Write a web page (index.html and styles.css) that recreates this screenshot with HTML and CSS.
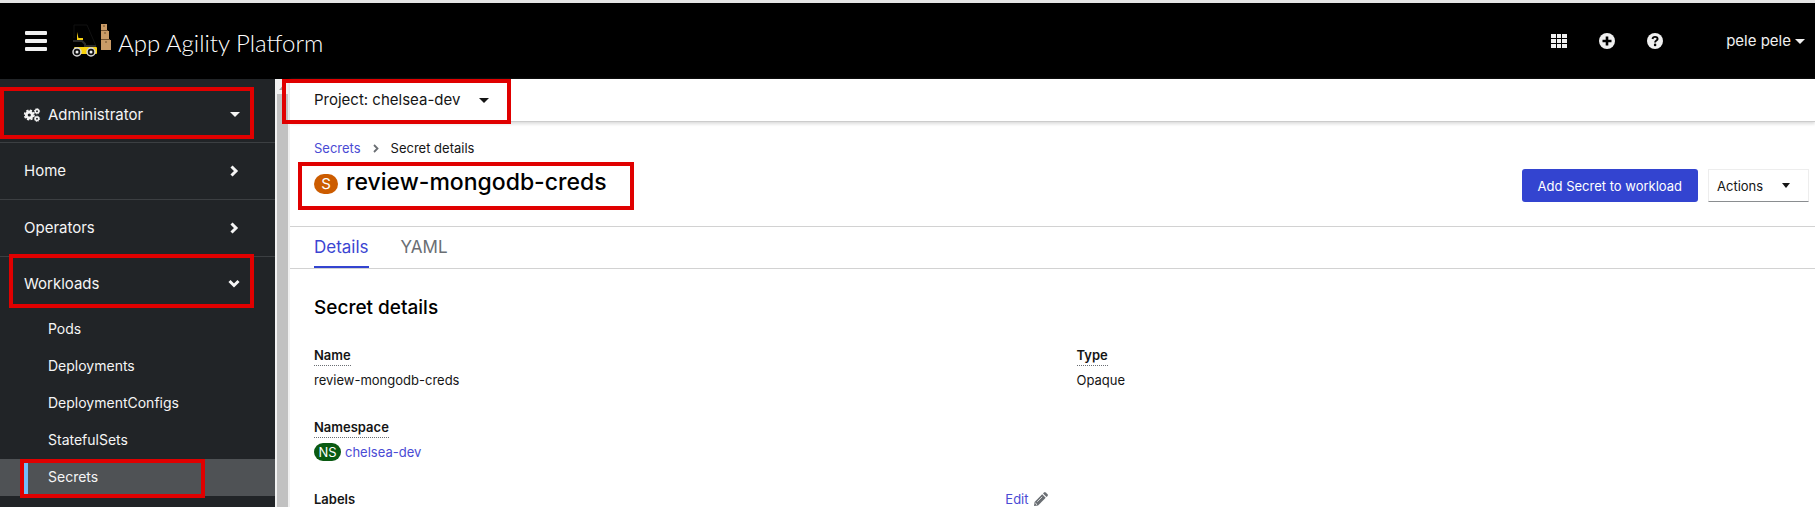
FILE: index.html
```html
<!DOCTYPE html>
<html lang="en">
<head>
<meta charset="utf-8">
<title>review-mongodb-creds · Secret details</title>
<link rel="stylesheet" href="styles.css">
</head>
<body>
<header class="masthead">
  <button class="icon-button" aria-label="Toggle navigation">
    <svg width="22" height="20" viewBox="0 0 22 20" fill="currentColor"><rect y="0" width="22" height="4" rx="1"/><rect y="8" width="22" height="4" rx="1"/><rect y="16" width="22" height="4" rx="1"/></svg>
  </button>
  <a class="brand" href="#">
    <svg width="39" height="34" viewBox="0 0 39 34" aria-hidden="true">
      <path d="M2 14V1H15L24 22" fill="none" stroke="#111" stroke-width="1"/>
      <path d="M5 8L6.500 14H11V16H5Z" fill="#f5cf12"/>
      <path d="M1 17H10L13 20V22H24" fill="none" stroke="#292929" stroke-width="2"/>
      <rect x="2" y="23" width="23" height="7" rx="1" fill="#f8d20c"/>
      <g fill="#111" stroke="#d8d8d8" stroke-width="1.500"><circle cx="5" cy="28" r="4"/><circle cx="19" cy="28" r="4"/></g>
      <g fill="#eee"><circle cx="5" cy="28" r="1.500"/><circle cx="19" cy="28" r="1.500"/></g>
      <g fill="#c99b67"><rect x="29" y="0" width="6" height="6"/><rect x="29" y="7" width="8" height="8"/><rect x="29" y="16" width="10" height="10"/></g>
      <path d="M32 1v2M33 8v2M34 17v2M29 6.500h7M29 15.500h9" stroke="#70502f" fill="none"/>
    </svg>
    <span>App Agility Platform</span>
  </a>
  <div class="tools">
    <button class="icon-button" aria-label="Applications">
      <svg width="16" height="14" viewBox="0 0 16 14" fill="currentColor"><path d="M0 0h5v4H0zM6 0h4v4H6zM11 0h5v4h-5zM0 5h5v4H0zM6 5h4v4H6zM11 5h5v4h-5zM0 10h5v4H0zM6 10h4v4H6zM11 10h5v4h-5z"/></svg>
    </button>
    <button class="icon-button" aria-label="Add">
      <svg width="16" height="16" viewBox="0 0 16 16"><circle cx="8" cy="8" r="8" fill="currentColor"/><path d="M8 3.500v9M3.500 8h9" stroke="#000" stroke-width="2.600"/></svg>
    </button>
    <button class="icon-button" aria-label="Help">
      <svg width="16" height="16" viewBox="0 0 16 16"><circle cx="8" cy="8" r="8" fill="currentColor"/><path d="M5.500 6C5.700 4.500 6.700 3.900 8 3.900C9.500 3.900 10.600 4.700 10.600 5.900C10.600 7.500 8.100 7.500 8.100 9.400" fill="none" stroke="#000" stroke-width="1.900"/><circle cx="8.100" cy="11.900" r="1.300"/></svg>
    </button>
    <button class="user">pele pele <svg width="10" height="5" viewBox="0 0 10 5" fill="currentColor"><path d="M0 0H10L5 5Z"/></svg></button>
  </div>
</header>
<div class="page">
  <nav class="sidebar" aria-label="Main">
    <div class="nav-section perspective">
      <button class="nav-row">
        <svg width="16" height="14" viewBox="0 0 16 14" fill="none" stroke="currentColor">
          <circle cx="5.300" cy="7" r="3" stroke-width="2.800"/>
          <circle cx="5.300" cy="7" r="4.700" stroke-width="1.600" stroke-dasharray="2.200 1.490"/>
          <circle cx="13" cy="3.200" r="1.700" stroke-width="1.500"/><circle cx="13" cy="3.200" r="2.600" stroke-width="1" stroke-dasharray="1.200 .84"/>
          <circle cx="13" cy="10.800" r="1.700" stroke-width="1.500"/><circle cx="13" cy="10.800" r="2.600" stroke-width="1" stroke-dasharray="1.200 .84"/>
        </svg>
        <span>Administrator</span>
        <svg class="arrow" width="10" height="5" viewBox="0 0 10 5" fill="currentColor"><path d="M0 0H10L5 5Z"/></svg>
      </button>
      <span class="mark"></span>
    </div>
    <div class="nav-section"><button class="nav-row"><span>Home</span><svg class="arrow" width="10" height="12" viewBox="0 0 10 12"><path d="M1.500 1.500L6 6L1.500 10.500" fill="none" stroke="currentColor" stroke-width="3"/></svg></button></div>
    <div class="nav-section"><button class="nav-row"><span>Operators</span><svg class="arrow" width="10" height="12" viewBox="0 0 10 12"><path d="M1.500 1.500L6 6L1.500 10.500" fill="none" stroke="currentColor" stroke-width="3"/></svg></button></div>
    <div class="nav-section workloads">
      <button class="nav-row" aria-expanded="true"><span>Workloads</span><svg class="arrow" width="12" height="10" viewBox="0 0 12 10"><path d="M1.500 2L6 6.500L10.500 2" fill="none" stroke="currentColor" stroke-width="3"/></svg></button>
      <span class="mark"></span>
    </div>
    <ul class="subnav">
      <li><a href="#">Pods</a></li>
      <li><a href="#">Deployments</a></li>
      <li><a href="#">DeploymentConfigs</a></li>
      <li><a href="#">StatefulSets</a></li>
      <li class="current"><a href="#" aria-current="page">Secrets</a><span class="mark"></span></li>
    </ul>
  </nav>
  <div class="scrollbar" aria-hidden="true">
    <svg width="7" height="4" viewBox="0 0 7 4" fill="#a3a3a3"><path d="M0 4L3.500 0L7 4Z"/></svg>
    <div class="thumb"></div>
  </div>
  <main class="content">
    <div class="project-bar">
      <button class="project">Project: chelsea-dev <svg width="10" height="5" viewBox="0 0 10 5" fill="currentColor"><path d="M0 0H10L5 5Z"/></svg></button>
      <span class="mark"></span>
    </div>
    <div class="heading">
      <div class="heading-text">
        <nav class="breadcrumb" aria-label="Breadcrumb">
          <a href="#">Secrets</a>
          <svg width="6" height="9" viewBox="0 0 6 9"><path d="M1 1L4.500 4.500L1 8" fill="none" stroke="#6a6e73" stroke-width="1.800"/></svg>
          <span>Secret details</span>
        </nav>
        <div class="title">
          <span class="badge secret">S</span>
          <h1>review-mongodb-creds</h1>
          <span class="mark"></span>
        </div>
      </div>
      <div class="actions">
        <button class="primary">Add Secret to workload</button>
        <button class="menu">Actions <svg width="8" height="5" viewBox="0 0 8 5" fill="currentColor"><path d="M0 0H8L4 5Z"/></svg></button>
      </div>
    </div>
    <nav class="tabs" aria-label="Secret views">
      <a class="active" href="#" aria-current="page">Details</a>
      <a href="#">YAML</a>
    </nav>
    <section class="details">
      <h2>Secret details</h2>
      <div class="columns">
        <dl>
          <div class="field"><dt><span>Name</span></dt><dd>review-mongodb-creds</dd></div>
          <div class="field"><dt><span>Namespace</span></dt><dd><span class="badge namespace">NS</span><a href="#">chelsea-dev</a></dd></div>
          <div class="field"><dt>Labels<button class="edit">Edit
            <svg width="14" height="14" viewBox="0 0 14 14" fill="#6a6e73"><path d="M8.200 2.300L11.700 5.800L4.100 13.400L0 14L.6 9.900Z"/><path d="M9 1.500L10.100.4Q10.900-.3 11.700.4L13.600 2.300Q14.300 3.100 13.600 3.900L12.500 5Z"/><path d="M3.200 9.800L8.200 4.800" stroke="#fff" stroke-width=".7"/><path d="M1.300 11L3 12.700" stroke="#fff"/></svg></button></dt></div>
        </dl>
        <dl>
          <div class="field"><dt><span>Type</span></dt><dd>Opaque</dd></div>
        </dl>
      </div>
    </section>
  </main>
</div>
</body>
</html>
```
FILE: styles.css
```css
* { box-sizing: border-box; }
body {
  margin: 0;
  height: 100vh;
  overflow: hidden;
  display: flex;
  flex-direction: column;
  background: #fff;
  color: #151515;
  font-family: Inter, "Open Sans", sans-serif;
  font-size: 13px;
  line-height: 20px;
}
button {
  border: 0;
  padding: 0;
  background: none;
  color: inherit;
  font: inherit;
  cursor: pointer;
}
a { color: #4a4bd4; text-decoration: none; }
h1, h2, dl, dd, ul { margin: 0; padding: 0; }
svg { display: block; flex: none; overflow: visible; }

.mark {
  position: absolute;
  border: 4px solid #e00000;
  pointer-events: none;
  z-index: 2;
}

.masthead {
  flex: none;
  height: 79px;
  padding: 0 10px 0 25px;
  display: flex;
  align-items: center;
  background: #000;
  border-top: 3px solid #e4e4e4;
  color: #f0f0f0;
}
.icon-button { display: flex; }
.brand {
  display: flex;
  align-items: center;
  gap: 7px;
  margin-left: 25px;
  color: #fff;
  font-family: Lato, sans-serif;
  font-size: 24px;
  font-weight: 300;
  line-height: 32px;
}
.brand span { padding-top: 4px; }
.tools {
  margin-left: auto;
  display: flex;
  align-items: center;
  gap: 32px;
}
.user {
  display: flex;
  align-items: center;
  gap: 4px;
  margin-left: 31px;
  font-size: 15px;
}

.page { flex: 1; min-height: 0; display: flex; }
.sidebar {
  flex: none;
  width: 275px;
  background: #212427;
  color: #f5f5f5;
}
.nav-section {
  position: relative;
  border-bottom: 1px solid #3c3f42;
}
.nav-row {
  width: 100%;
  height: 56px;
  padding: 0 35px 0 24px;
  display: flex;
  align-items: center;
  font-size: 15px;
  text-align: left;
}
.perspective .nav-row { height: 63px; padding-top: 8px; gap: 8px; }
.arrow { margin-left: auto; }
.workloads { border: 0; }
.workloads .nav-row { height: 54px; }
.perspective .mark { inset: 8px 21px 3px 0; }
.workloads .mark { inset: -3px 21px 3px 9px; }
.subnav { list-style: none; font-size: 14px; }
.subnav li { position: relative; }
.subnav a {
  display: block;
  margin-left: 24px;
  padding: 8px 24px 9px;
  color: #f5f5f5;
}
.current { background: #4f5255; }
.subnav .current a { border-left: 4px solid #73bcf7; padding-left: 20px; }
.current .mark { inset: 0 70px -2px 20px; }

.scrollbar {
  flex: none;
  width: 15px;
  padding: 7px 2px 0;
  display: flex;
  flex-direction: column;
  align-items: center;
  gap: 4px;
  background: #f1f1f1;
}
.thumb { width: 11px; flex: 1; background: #c1c1c1; }

.content { flex: 1; min-width: 0; }
.project-bar {
  position: relative;
  height: 43px;
  padding: 0 24px;
  display: flex;
  align-items: center;
  border-bottom: 1px solid #ccc;
  box-shadow: 0 2px 3px #ddd;
}
.project {
  display: flex;
  align-items: center;
  gap: 19px;
  font-size: 15px;
}
.project-bar .mark { left: -8px; top: 0; width: 229px; height: 45px; }

.heading {
  padding: 16px 6px 16px 24px;
  display: flex;
  justify-content: space-between;
  border-bottom: 1px solid #d2d2d2;
}
.breadcrumb {
  display: flex;
  align-items: center;
  gap: 12px;
}
.title {
  position: relative;
  display: flex;
  align-items: center;
  gap: 8px;
  padding: 8px 0 12px;
}
h1 { font-size: 23px; line-height: 32px; font-weight: 500; color: #000; }
.title .mark { inset: 4px -27px 0 -16px; }
.badge {
  border-radius: 20px;
  color: #fff;
  text-align: center;
}
.secret {
  width: 24px;
  margin-top: 4px;
  background: #cc5c00;
  font-size: 15px;
}
.actions {
  display: flex;
  align-items: flex-start;
  gap: 10px;
  padding-top: 31px;
}
.primary {
  height: 33px;
  padding: 0 16px;
  border-radius: 3px;
  background: #3344d0;
  color: #fff;
}
.menu {
  height: 33px;
  width: 101px;
  padding: 0 18px 0 8px;
  display: flex;
  align-items: center;
  justify-content: space-between;
  border: 1px solid #ededed;
  border-bottom-color: #8a8d90;
}

.tabs {
  display: flex;
  gap: 32px;
  padding: 0 24px;
  border-bottom: 1px solid #d2d2d2;
}
.tabs a {
  padding: 10px 0 9px;
  border-bottom: 2px solid transparent;
  font-size: 17px;
  color: #6a6e73;
}
.tabs .active { color: #3b45d2; border-color: #3344d0; }

.details h2 {
  padding: 27px 24px 25px;
  font-size: 19px;
  line-height: 24px;
  font-weight: 500;
  color: #000;
}
.columns { display: grid; grid-template-columns: 1fr 1fr; }
.columns dl { padding: 0 5px 0 24px; }
.field { margin-bottom: 27px; }
.field:last-child { margin-bottom: 0; }
.field dt {
  display: flex;
  align-items: center;
  justify-content: space-between;
  font-weight: 600;
}
.field dt > span { border-bottom: 1px dotted #6a6e73; }
.field dd { display: flex; align-items: center; gap: 4px; margin-top: 4px; }
.namespace {
  width: 27px;
  line-height: 18px;
  margin: 1px 0;
  background: #0a5a12;
}
.edit {
  display: flex;
  align-items: center;
  gap: 5px;
  font-weight: 400;
  color: #4a4bd4;
}
```
